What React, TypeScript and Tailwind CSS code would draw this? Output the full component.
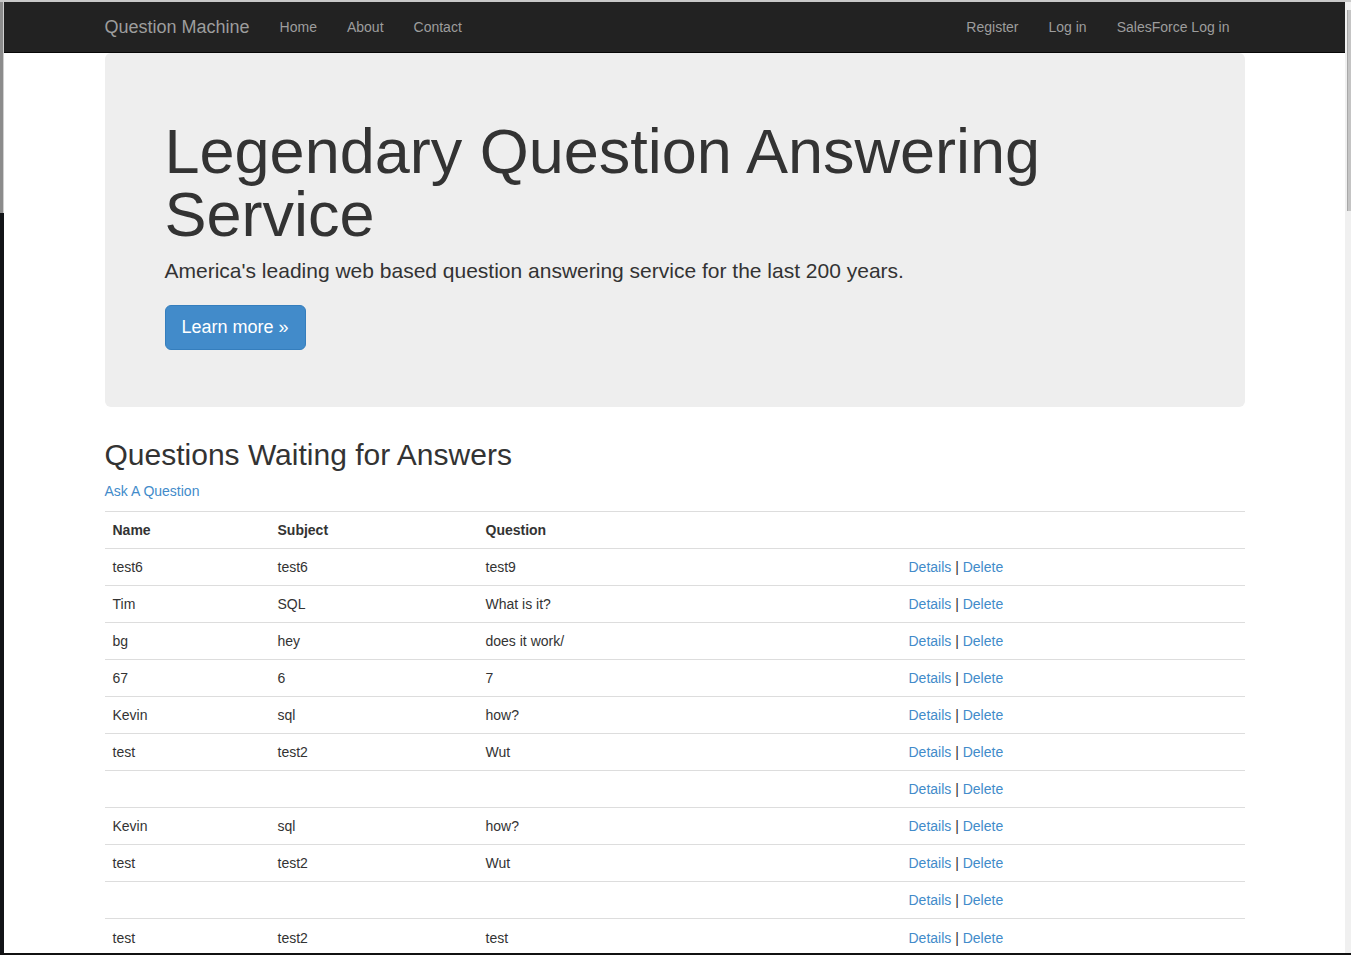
import React from 'react';

const rows = [
    ['test6', 'test6', 'test9'],
    ['Tim', 'SQL', 'What is it?'],
    ['bg', 'hey', 'does it work/'],
    ['67', '6', '7'],
    ['Kevin', 'sql', 'how?'],
    ['test', 'test2', 'Wut'],
    ['', '', ''],
    ['Kevin', 'sql', 'how?'],
    ['test', 'test2', 'Wut'],
    ['', '', ''],
    ['test', 'test2', 'test'],
];

export default function App() {
    return (
        <div className="flex h-[955px] w-[1351px] flex-col overflow-hidden bg-[#111] font-['Liberation_Sans',Arial,sans-serif] text-[14px] leading-[20px] text-[#333]">
            {/* window top edge */}
            <div className="h-[2px] bg-[#c9c9c9]" />

            <div className="flex min-h-0 flex-1">
                {/* left edge of the window */}
                <div className="flex w-[4px] flex-col">
                    <div className="h-[211px] border-r border-[#d0d0d0] bg-[#8c8c8c]" />
                    <div className="flex-1 bg-[#121417]" />
                </div>

                {/* PAGE */}
                <div className="min-w-0 flex-1 overflow-hidden bg-white">
                    {/* NAVBAR */}
                    <div className="h-[51px] border-b border-[#080808] bg-[#222]">
                        <div className="mx-auto flex w-[1170px] px-[15px]">
                            <a className="py-[15px] pr-[15px] text-[18px] leading-[20px] text-[#9d9d9d]" href="#">
                                Question Machine
                            </a>
                            <nav className="flex">
                                <a className="p-[15px] text-[#9d9d9d]" href="#">Home</a>
                                <a className="p-[15px] text-[#9d9d9d]" href="#">About</a>
                                <a className="p-[15px] text-[#9d9d9d]" href="#">Contact</a>
                            </nav>
                            <nav className="ml-auto flex">
                                <a className="p-[15px] text-[#9d9d9d]" href="#">Register</a>
                                <a className="p-[15px] text-[#9d9d9d]" href="#">Log in</a>
                                <a className="p-[15px] text-[#9d9d9d]" href="#">SalesForce Log in</a>
                            </nav>
                        </div>
                    </div>

                    <div className="mx-auto w-[1170px] px-[15px]">
                        {/* JUMBOTRON */}
                        <div className="rounded-[6px] bg-[#eee] px-[60px] pb-[57px] pt-[48px]">
                            <h1 className="mt-[19px] text-[63px] font-normal leading-none">
                                Legendary Question Answering Service
                            </h1>
                            <p className="mt-[10px] text-[21px] leading-[1.4]">
                                America's leading web based question answering service for the last 200 years.
                            </p>
                            <div className="mt-[20px] flex">
                                <a className="rounded-[6px] border border-[#357ebd] bg-[#428bca] px-[16px] py-[10px] text-[18px] leading-[23px] text-white" href="#">
                                    Learn more &raquo;
                                </a>
                            </div>
                        </div>

                        {/* QUESTIONS */}
                        <h2 className="mt-[31px] text-[30px] font-normal leading-[33px]">Questions Waiting for Answers</h2>
                        <p className="mt-[10px]">
                            <a className="text-[#428bca]" href="#">Ask A Question</a>
                        </p>

                        <table className="mt-[10px] w-full border-collapse">
                            <colgroup>
                                <col className="w-[165px]" />
                                <col className="w-[208px]" />
                                <col className="w-[423px]" />
                                <col />
                            </colgroup>
                            <tbody>
                                <tr>
                                    <th className="border-t border-[#ddd] p-[8px] text-left font-bold">Name</th>
                                    <th className="border-t border-[#ddd] p-[8px] text-left font-bold">Subject</th>
                                    <th className="border-t border-[#ddd] p-[8px] text-left font-bold">Question</th>
                                    <th className="border-t border-[#ddd] p-[8px]"></th>
                                </tr>
                                {rows.map((r, i) => (
                                    <tr key={i}>
                                        <td className="h-[37px] border-t border-[#ddd] p-[8px]">{r[0]}</td>
                                        <td className="h-[37px] border-t border-[#ddd] p-[8px]">{r[1]}</td>
                                        <td className="h-[37px] border-t border-[#ddd] p-[8px]">{r[2]}</td>
                                        <td className="h-[37px] border-t border-[#ddd] p-[8px]">
                                            <a className="text-[#428bca]" href="#">Details</a> | <a className="text-[#428bca]" href="#">Delete</a>
                                        </td>
                                    </tr>
                                ))}
                            </tbody>
                        </table>
                    </div>
                </div>

                {/* SCROLLBAR */}
                <div className="w-[6px] bg-[#f0f0f0] pt-[8px]">
                    <div className="ml-[2px] h-[201px] border-l border-[#a8a8a8] bg-[#c4c4c4]" />
                </div>
            </div>

            {/* window bottom edge */}
            <div className="h-[2px] bg-[#111]" />
        </div>
    );
}
